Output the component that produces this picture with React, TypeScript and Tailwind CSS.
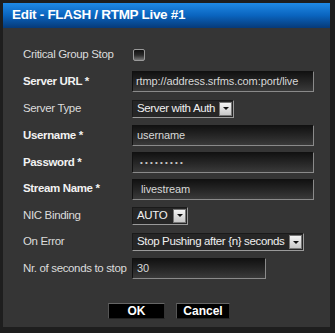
import React from "react";

const font = { fontFamily: '"Liberation Sans", Arial, sans-serif' };

function Label({ text, bold }: { text: string; bold?: boolean }) {
  return (
    <div
      className={`w-[109px] shrink-0 whitespace-nowrap text-[11.5px] tracking-[-0.35px] ${bold ? "font-bold text-[#f2f2f2]" : "text-[#dcdcdc]"}`}
    >
      {text}
    </div>
  );
}

function TextInput({ value, w, pl, password }: { value: string; w: string; pl: string; password?: boolean }) {
  return (
    <div
      className={`${w} ${pl} h-[21px] flex items-center border border-t-[#111] border-l-[#111] border-r-[#8a8a8a] border-b-[#8a8a8a] bg-gradient-to-b from-[#121212] to-[#3a3a3a] text-[11px] tracking-[-0.1px] text-[#d8d8d8] overflow-hidden whitespace-nowrap`}
    >
      {password ? <span className="text-[8px] tracking-[2.2px] text-[#c8c8c8]">•••••••••</span> : value}
    </div>
  );
}

function Select({ value, w }: { value: string; w: string }) {
  return (
    <div
      className={`${w} h-[18px] flex items-center border border-t-[#1a1a1a] border-l-[#1a1a1a] border-r-[#9a9a9a] border-b-[#9a9a9a] bg-[#262626] text-[11.5px] tracking-[-0.35px] text-[#f0f0f0] whitespace-nowrap overflow-hidden`}
    >
      <span className="pl-[4px] flex-1">{value}</span>
      <span className="w-[13px] h-[14px] mr-[1px] shrink-0 bg-gradient-to-b from-[#f4f4f4] to-[#c8c8c8] border border-[#777] flex items-center justify-center">
        <span className="w-0 h-0 border-l-[3px] border-r-[3px] border-t-[3px] border-l-transparent border-r-transparent border-t-[#111]" />
      </span>
    </div>
  );
}

function Row({ h, children }: { h: string; children: React.ReactNode }) {
  return <div className={`${h} flex items-center`}>{children}</div>;
}

export default function App() {
  return (
    <div className="w-[335px] h-[333px] bg-[#1e1e1e] pt-[3px] pl-[3px]" style={font}>
      <div className="w-[327px] h-[324px] bg-[#353535] flex flex-col">
        <div className="h-[25px] bg-gradient-to-b from-[#1f8ae6] via-[#0a64be] to-[#063a78] flex items-center pl-[9px]">
          <span className="text-white font-bold text-[13.5px] tracking-[-0.3px]">Edit - FLASH / RTMP Live #1</span>
        </div>
        <div className="pl-[20px] pt-[14px] flex flex-col">
          <Row h="h-[26px]">
            <Label text="Critical Group Stop" />
            <div className="ml-[1px] w-[12px] h-[12px] rounded-[2px] border border-[#9a9a9a] bg-gradient-to-b from-[#111] via-[#2a2a2a] to-[#777]" />
          </Row>
          <Row h="h-[27px]">
            <Label text="Server URL *" bold />
            <TextInput value="rtmp://address.srfms.com:port/live" w="w-[182px]" pl="pl-[3px]" />
          </Row>
          <Row h="h-[27px]">
            <Label text="Server Type" />
            <Select value="Server with Auth" w="w-[102px]" />
          </Row>
          <Row h="h-[27px]">
            <Label text="Username *" bold />
            <TextInput value="username" w="w-[182px]" pl="pl-[4px]" />
          </Row>
          <Row h="h-[27px]">
            <Label text="Password *" bold />
            <TextInput value="" w="w-[182px]" pl="pl-[7px]" password />
          </Row>
          <Row h="h-[26px]">
            <Label text="Stream Name *" bold />
            <TextInput value="livestream" w="w-[182px]" pl="pl-[8px]" />
          </Row>
          <Row h="h-[27px]">
            <Label text="NIC Binding" />
            <Select value="AUTO" w="w-[56px]" />
          </Row>
          <Row h="h-[26px]">
            <Label text="On Error" />
            <Select value="Stop Pushing after {n} seconds" w="w-[172px]" />
          </Row>
          <Row h="h-[27px]">
            <Label text="Nr. of seconds to stop" />
            <TextInput value="30" w="w-[134px]" pl="pl-[4px]" />
          </Row>
          <div className="flex mt-[21px] ml-[85px] gap-[11px]">
            <button className="w-[57px] h-[16px] bg-black border border-t-[#666] border-l-[#555] border-r-[#333] border-b-[#222] text-white font-bold text-[12px] leading-none flex items-center justify-center">
              OK
            </button>
            <button className="w-[54px] h-[16px] bg-black border border-t-[#666] border-l-[#555] border-r-[#333] border-b-[#222] text-white font-bold text-[12px] leading-none flex items-center justify-center">
              Cancel
            </button>
          </div>
        </div>
      </div>
    </div>
  );
}
